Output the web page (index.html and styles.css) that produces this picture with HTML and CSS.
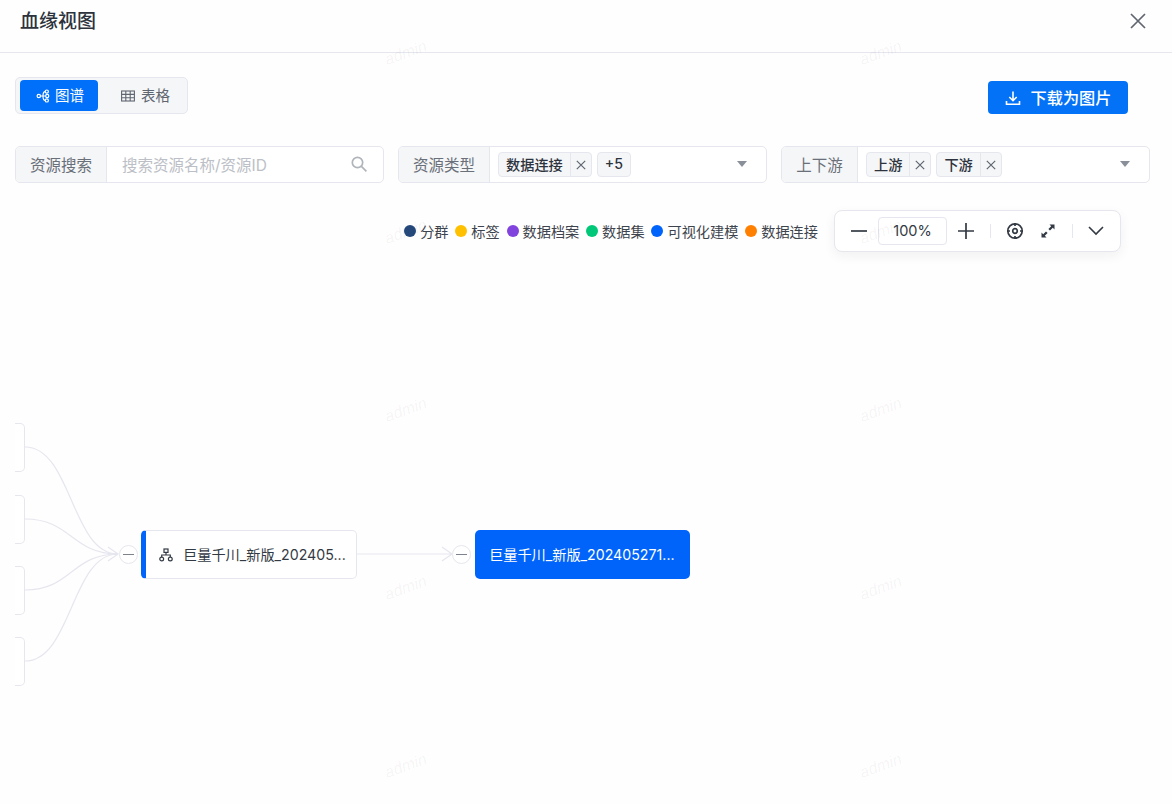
FILE: index.html
```html
<!DOCTYPE html>
<html lang="zh-CN">
<head>
<meta charset="utf-8">
<title>血缘视图</title>
<link rel="stylesheet" href="styles.css">
</head>
<body>
<div class="modal">
  <header class="head">
    <h1 class="title">血缘视图</h1>
    <svg class="close" width="18" height="18" viewBox="0 0 18 18"><path d="M2 2l14 14M16 2L2 16" fill="none" stroke="#5f6670" stroke-width="1.7"/></svg>
  </header>
  <section class="bar">
    <div class="tabs">
      <div class="tab tab-on">
        <svg width="14" height="14" viewBox="0 0 14 14" fill="none" stroke="#fff" stroke-width="1.2"><circle cx="2.8" cy="7" r="1.7"/><circle cx="10.8" cy="2.6" r="1.6"/><circle cx="11.2" cy="7" r="1.6"/><circle cx="10.8" cy="11.4" r="1.6"/><path d="M4.5 7h5M7 7C7 4 7.500 2.600 9.200 2.600M7 7c0 3 .5 4.400 2.200 4.400"/></svg>
        <span>图谱</span>
      </div>
      <div class="tab tab-off">
        <svg width="14" height="12" viewBox="0 0 14 12" fill="none" stroke="#5f6670" stroke-width="1.1"><rect x=".6" y="1" width="12.8" height="10"/><path d="M.6 4.400h12.800M.6 7.700h12.800M4.800 1v10M9.200 1v10"/></svg>
        <span>表格</span>
      </div>
    </div>
    <button class="download">
      <svg width="16" height="16" viewBox="0 0 16 16" fill="none" stroke="#fff" stroke-width="1.6"><path d="M8 1.500v9M4.300 7L8 10.700 11.700 7M1.500 11v3.300h13V11"/></svg>
      <span>下载为图片</span>
    </button>
  </section>
  <section class="filters">
    <div class="field">
      <div class="addon">资源搜索</div>
      <div class="control">
        <span class="placeholder">搜索资源名称/资源ID</span>
        <svg class="search" width="18" height="18" viewBox="0 0 18 18" fill="none" stroke="#b0b4bb" stroke-width="1.7"><circle cx="7.5" cy="7.5" r="5.2"/><path d="M11.4 11.4l5 5"/></svg>
      </div>
    </div>
    <div class="field">
      <div class="addon">资源类型</div>
      <div class="control">
        <span class="tag"><b>数据连接</b><i class="x"><svg width="10" height="10" viewBox="0 0 10 10"><path d="M.8.8l8.400 8.400M9.200.8L.8 9.200" stroke="#5f6670" stroke-width="1.2"/></svg></i></span>
        <span class="tag"><b>+5</b></span>
        <span class="caret"></span>
      </div>
    </div>
    <div class="field field-sm">
      <div class="addon">上下游</div>
      <div class="control">
        <span class="tag"><b>上游</b><i class="x"><svg width="10" height="10" viewBox="0 0 10 10"><path d="M.8.8l8.400 8.400M9.200.8L.8 9.200" stroke="#5f6670" stroke-width="1.2"/></svg></i></span>
        <span class="tag"><b>下游</b><i class="x"><svg width="10" height="10" viewBox="0 0 10 10"><path d="M.8.8l8.400 8.400M9.200.8L.8 9.200" stroke="#5f6670" stroke-width="1.2"/></svg></i></span>
        <span class="caret"></span>
      </div>
    </div>
  </section>
  <section class="tools">
    <ul class="legend">
      <li><i class="dot c1"></i>分群</li>
      <li><i class="dot c2"></i>标签</li>
      <li><i class="dot c3"></i>数据档案</li>
      <li><i class="dot c4"></i>数据集</li>
      <li><i class="dot c5"></i>可视化建模</li>
      <li><i class="dot c6"></i>数据连接</li>
    </ul>
    <div class="zoom">
      <svg class="zi" width="16" height="16" viewBox="0 0 16 16"><path d="M0 8h16" stroke="#333a44" stroke-width="1.7"/></svg>
      <div class="pct">100%</div>
      <svg class="zi" width="16" height="16" viewBox="0 0 16 16"><path d="M0 8h16M8 0v16" stroke="#333a44" stroke-width="1.7"/></svg>
      <span class="sep"></span>
      <svg class="zi" width="18" height="18" viewBox="0 0 18 18" fill="none" stroke="#333a44" stroke-width="1.7"><circle cx="9" cy="9" r="7.2"/><circle cx="9" cy="9" r="2.300"/><path d="M9 1v3M9 14v3M1 9h3M14 9h3"/></svg>
      <svg class="zi zi-fit" width="16" height="16" viewBox="0 0 16 16" fill="#333a44"><path d="M9.500 1.500H14.500V6.500L12.800 4.800L10 7.600L8.400 6L11.200 3.200zM6.500 14.500H1.500V9.500L3.200 11.200L6 8.400L7.600 10L4.800 12.800z"/></svg>
      <span class="sep"></span>
      <svg class="zi" width="16" height="10" viewBox="0 0 16 10" fill="none" stroke="#333a44" stroke-width="1.6"><path d="M1 1l7 7 7-7"/></svg>
    </div>
  </section>
  <section class="canvas">
    <svg class="edges" width="1172" height="552" viewBox="0 0 1172 552" fill="none" stroke="#e6e6ef" stroke-width="1.2">
      <path d="M25 195C71.500 195 71.500 302 118 302"/>
      <path d="M25 267C71.500 267 71.500 302 118 302"/>
      <path d="M25 338C71.500 338 71.500 302 118 302"/>
      <path d="M25 409C71.500 409 71.500 302 118 302"/>
      <path d="M108 295l10 7-10 7"/>
      <path d="M357 302H452M442 295l10 7-10 7"/>
    </svg>
    <div class="stub s1"></div>
    <div class="stub s2"></div>
    <div class="stub s3"></div>
    <div class="stub s4"></div>
    <div class="toggle t1"></div>
    <div class="toggle t2"></div>
    <div class="node n1">
      <svg width="14" height="14" viewBox="0 0 14 14" fill="none" stroke="#333a44" stroke-width="1.2"><rect x="5" y="1" width="4" height="3.4"/><circle cx="2.700" cy="11" r="1.900"/><circle cx="11.300" cy="11" r="1.900"/><path d="M7 4.400V7M2.700 9V7h8.600v2"/></svg>
      <span>巨量千川_新版_202405...</span>
    </div>
    <div class="node n2"><span>巨量千川_新版_202405271...</span></div>
  </section>
  <div class="marks">
    <span class="mk m1">admin</span><span class="mk m2">admin</span>
    <span class="mk m3">admin</span><span class="mk m4">admin</span>
    <span class="mk m5">admin</span><span class="mk m6">admin</span>
    <span class="mk m7">admin</span><span class="mk m8">admin</span>
    <span class="mk m9">admin</span><span class="mk m10">admin</span>
  </div>
</div>
</body>
</html>
```

FILE: styles.css
```css
* { box-sizing: border-box; }
html, body { margin: 0; padding: 0; background: #fff; }
body {
  font-family: Inter, "Noto Sans CJK SC", sans-serif;
  color: #333a44;
  font-size: 14px;
  overflow: hidden;
}
.modal { position: relative; width: 1172px; height: 804px; overflow: hidden; background: #fefefe; }
.head {
  height: 53px;
  padding: 0 25px 8px 20px;
  border-bottom: 1px solid #e6e6ee;
  display: flex;
  align-items: center;
  justify-content: space-between;
}
.title { margin: 0; font-size: 19px; font-weight: 500; color: #2d333c; line-height: 26px; }
.close { margin-bottom: 2px; }
.bar {
  display: flex;
  justify-content: space-between;
  align-items: flex-start;
  padding: 24px 44px 0 15px;
  height: 93px;
}
.tabs {
  width: 173px;
  height: 37px;
  padding: 2px 4px;
  display: flex;
  background: #f5f6f8;
  border: 1px solid #e6e6ee;
  border-radius: 5px;
}
.tab {
  flex: none;
  display: flex;
  align-items: center;
  gap: 5px;
  border-radius: 4px;
  color: #5f6670;
  font-size: 14.500px;
}
.tab span { padding-bottom: 2px; }
.tab-on { width: 78px; padding-left: 16px; background: #0070fa; color: #fff; }
.tab-off { width: 85px; padding-left: 23px; gap: 6px; }
.download {
  margin-top: 4px;
  width: 140px;
  height: 33px;
  border: 0;
  border-radius: 4px;
  background: #0472f6;
  color: #fff;
  font: inherit;
  font-size: 16.200px;
  font-weight: 500;
  display: flex;
  align-items: center;
  justify-content: center;
  gap: 10px;
}
.download span { padding-bottom: 2px; }
.filters { display: flex; gap: 14px; padding: 0 22px 0 15px; }
.field {
  width: 369px;
  height: 37px;
  display: flex;
  border: 1px solid #e6e6ee;
  border-radius: 5px;
  background: #fff;
}
.addon {
  width: 91px;
  flex: none;
  display: flex;
  align-items: center;
  justify-content: center;
  padding-bottom: 2px;
  background: #f5f6f8;
  border-right: 1px solid #e6e6ee;
  border-radius: 4px 0 0 4px;
  color: #6a7079;
  font-size: 15.500px;
}
.field-sm .addon { width: 76px; }
.control {
  flex: 1;
  display: flex;
  align-items: center;
  gap: 5px;
  padding: 0 8px;
  position: relative;
}
.placeholder { color: #bcc0c6; font-size: 15.500px; padding: 0 0 2px 7px; }
.search { position: absolute; right: 15px; top: 8px; }
.tag {
  display: inline-flex;
  height: 25px;
  align-items: center;
  background: #f5f6f8;
  border: 1px solid #e6e6ee;
  border-radius: 4px;
}
.tag b { font-weight: 500; font-size: 14.200px; padding: 0 7px 2px; color: #2d333c; }
.x {
  width: 21px;
  height: 23px;
  display: flex;
  align-items: center;
  justify-content: center;
  border-left: 1px solid #e6e6ee;
}
.caret {
  position: absolute;
  right: 19px;
  top: 14px;
  border-left: 5px solid transparent;
  border-right: 5px solid transparent;
  border-top: 6px solid #8a9099;
}
.tools {
  display: flex;
  justify-content: flex-end;
  align-items: center;
  gap: 16px;
  padding: 27px 51px 0 0;
}
.legend { display: flex; gap: 6.800px; list-style: none; margin: 0; padding: 0; font-size: 14.200px; color: #3e444d; }
.legend li { display: flex; align-items: center; gap: 4px; }
.dot { flex: none; width: 12px; height: 12px; border-radius: 50%; }
.c1 { background: #26497c; }
.c2 { background: #ffc000; }
.c3 { background: #8043dd; }
.c4 { background: #00c878; }
.c5 { background: #0064fa; }
.c6 { background: #ff8000; }
.zoom {
  width: 287px;
  height: 42px;
  display: flex;
  align-items: center;
  padding: 0 16px;
  border: 1px solid #e6e6ee;
  border-radius: 8px;
  background: #fff;
  box-shadow: 0 4px 12px rgba(30, 40, 60, .06);
}
.zi { flex: none; }
.pct {
  width: 69px;
  height: 28px;
  margin: 0 11px;
  padding-bottom: 1px;
  display: flex;
  align-items: center;
  justify-content: center;
  border: 1px solid #e6e6ee;
  border-radius: 4px;
  font-size: 14.500px;
}
.sep { flex: none; width: 1px; height: 14px; background: #e6e6ee; margin: 0 15px 0 16px; }
.zi-fit { margin-left: 16px; }
.canvas { position: relative; height: 552px; }
.edges { position: absolute; left: 0; top: 0; }
.stub {
  position: absolute;
  left: 15px;
  width: 10px;
  height: 49px;
  background: #fff;
  border: 1px solid #e6e6ee;
  border-left: 0;
  border-radius: 0 5px 5px 0;
}
.s1 { top: 171px; }
.s2 { top: 243px; }
.s3 { top: 314px; }
.s4 { top: 385px; }
.toggle {
  position: absolute;
  width: 19px;
  height: 19px;
  top: 293px;
  background: #fff;
  border: 1px solid #e6e6ee;
  border-radius: 50%;
}
.toggle::after {
  content: "";
  position: absolute;
  left: 3px;
  top: 8px;
  width: 11px;
  height: 1px;
  background: #7d838c;
}
.t1 { left: 119px; }
.t2 { left: 452px; }
.node {
  position: absolute;
  top: 278px;
  height: 49px;
  display: flex;
  align-items: center;
  font-size: 14.200px;
  border-radius: 5px;
  white-space: nowrap;
}
.node span { padding-bottom: 2px; }
.n1 {
  left: 141px;
  width: 216px;
  gap: 10px;
  padding-left: 13px;
  background: #fff;
  border: 1px solid #e6e6ee;
  border-left: 5px solid #0064fa;
}
.n2 {
  left: 475px;
  width: 215px;
  padding-left: 14px;
  background: #0064fa;
  color: #fff;
}
.marks { position: absolute; inset: 0; pointer-events: none; }
.mk {
  position: absolute;
  font-family: "Liberation Sans", sans-serif;
  font-size: 16px;
  font-style: italic;
  color: rgba(0, 0, 0, .05);
  transform: rotate(-20deg);
}
.m1, .m3, .m5, .m7, .m9 { left: 384px; }
.m2, .m4, .m6, .m8, .m10 { left: 859px; }
.m1, .m2 { top: 44px; }
.m3, .m4 { top: 223px; }
.m5, .m6 { top: 401px; }
.m7, .m8 { top: 579px; }
.m9, .m10 { top: 757px; }
```
